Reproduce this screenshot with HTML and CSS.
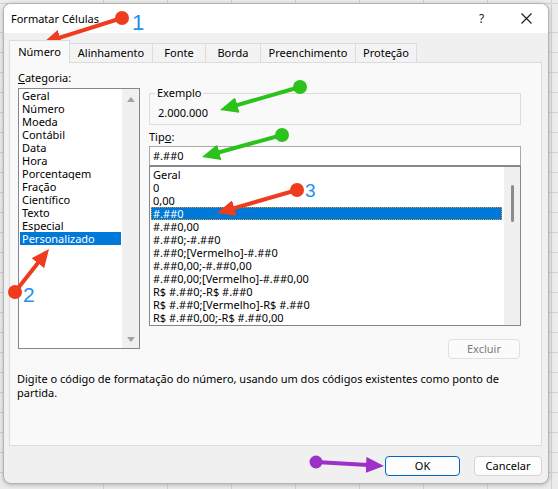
FILE: index.html
```html
<!DOCTYPE html>
<html lang="pt-BR">
<head>
<meta charset="utf-8">
<title>Formatar Células</title>
<link rel="stylesheet" href="styles.css">
</head>
<body>
<div class="desk">
  <div class="dialog">
    <div class="titlebar">
      <span class="title">Formatar Células</span>
      <span class="help">?</span>
      <span class="close"><svg width="11" height="11" viewBox="0 0 11 11"><path d="M0.5,0.5 L10.5,10.5 M10.5,0.5 L0.5,10.5" stroke="#1a1a1a" stroke-width="1.1" fill="none"/></svg></span>
    </div>
    <div class="tabs">
      <div class="tab active w1">Número</div>
      <div class="tab w2">Alinhamento</div>
      <div class="tab w3">Fonte</div>
      <div class="tab w4">Borda</div>
      <div class="tab w5">Preenchimento</div>
      <div class="tab w6">Proteção</div>
    </div>
    <div class="panel">
      <div class="cols">
        <div class="left">
          <div class="lbl"><u>C</u>ategoria:</div>
          <div class="list cat">
            <div class="items">
              <div class="item">Geral</div>
              <div class="item">Número</div>
              <div class="item">Moeda</div>
              <div class="item">Contábil</div>
              <div class="item">Data</div>
              <div class="item">Hora</div>
              <div class="item">Porcentagem</div>
              <div class="item">Fração</div>
              <div class="item">Científico</div>
              <div class="item">Texto</div>
              <div class="item">Especial</div>
              <div class="item sel">Personalizado</div>
            </div>
            <div class="vscroll">
              <span class="arrow up"></span>
              <span class="arrow down"></span>
            </div>
          </div>
        </div>
        <div class="right">
          <div class="group">
            <span class="legend">Exemplo</span>
            <div class="sample">2.000.000</div>
          </div>
          <div class="lbl tipo">Tip<u>o</u>:</div>
          <div class="input">#.##0</div>
          <div class="list types">
            <div class="items">
              <div class="item">Geral</div>
              <div class="item">0</div>
              <div class="item">0,00</div>
              <div class="item sel focus">#.##0</div>
              <div class="item">#.##0,00</div>
              <div class="item">#.##0;-#.##0</div>
              <div class="item">#.##0;[Vermelho]-#.##0</div>
              <div class="item">#.##0,00;-#.##0,00</div>
              <div class="item">#.##0,00;[Vermelho]-#.##0,00</div>
              <div class="item">R$ #.##0;-R$ #.##0</div>
              <div class="item">R$ #.##0;[Vermelho]-R$ #.##0</div>
              <div class="item">R$ #.##0,00;-R$ #.##0,00</div>
            </div>
            <div class="thinscroll"><span class="thumb"></span></div>
          </div>
          <div class="btnrow"><button class="btn disabled">Excluir</button></div>
        </div>
      </div>
      <p class="desc">Digite o código de formatação do número, usando um dos códigos existentes como ponto de partida.</p>
    </div>
    <div class="footer">
      <button class="btn ok">OK</button>
      <button class="btn cancel">Cancelar</button>
    </div>
  </div>

  <svg class="annot" width="558" height="489" viewBox="0 0 558 489">
    <defs>
      <marker id="mr" viewBox="0 0 18 16" refX="2" refY="8" markerWidth="18" markerHeight="16" orient="auto" markerUnits="userSpaceOnUse"><path d="M0,0 L18,8 L0,16 Z" fill="#ef3b1e"/></marker>
      <marker id="mg" viewBox="0 0 18 16" refX="2" refY="8" markerWidth="18" markerHeight="16" orient="auto" markerUnits="userSpaceOnUse"><path d="M0,0 L18,8 L0,16 Z" fill="#2bc21c"/></marker>
      <marker id="mp" viewBox="0 0 18 16" refX="2" refY="8" markerWidth="18" markerHeight="16" orient="auto" markerUnits="userSpaceOnUse"><path d="M0,0 L18,8 L0,16 Z" fill="#9d30c6"/></marker>
    </defs>
    <g class="red">
      <line x1="122" y1="18" x2="58.2" y2="38.2" stroke="#ef3b1e" stroke-width="4" marker-end="url(#mr)"/>
      <circle cx="122" cy="18" r="7" fill="#ef3b1e"/>
      <line x1="15" y1="292" x2="39.1" y2="261.6" stroke="#ef3b1e" stroke-width="4" marker-end="url(#mr)"/>
      <circle cx="15" cy="292" r="7" fill="#ef3b1e"/>
      <line x1="297" y1="190" x2="232.4" y2="208.6" stroke="#ef3b1e" stroke-width="4" marker-end="url(#mr)"/>
      <circle cx="297" cy="190" r="7" fill="#ef3b1e"/>
    </g>
    <g class="green">
      <line x1="300" y1="87" x2="235.4" y2="105.6" stroke="#2bc21c" stroke-width="4" marker-end="url(#mg)"/>
      <circle cx="300" cy="87" r="7" fill="#2bc21c"/>
      <line x1="282" y1="135" x2="217.4" y2="152.8" stroke="#2bc21c" stroke-width="4" marker-end="url(#mg)"/>
      <circle cx="282" cy="135" r="7" fill="#2bc21c"/>
    </g>
    <g class="purple">
      <line x1="316" y1="462" x2="368" y2="465" stroke="#9d30c6" stroke-width="4" marker-end="url(#mp)"/>
      <circle cx="316" cy="462" r="6.5" fill="#9d30c6"/>
    </g>
    <text class="num" x="132" y="30" font-size="22">1</text>
    <text class="num" x="23" y="302" font-size="21">2</text>
    <text class="num" x="305" y="197" font-size="19">3</text>
  </svg>
</div>
</body>
</html>
```

FILE: styles.css
```css
* { box-sizing: border-box; }
html, body { margin: 0; padding: 0; }
body {
  width: 558px;
  height: 489px;
  overflow: hidden;
  font-family: "Noto Sans", "Open Sans", sans-serif;
  font-size: 11px;
  color: #000;
}
.desk {
  position: relative;
  width: 558px;
  height: 489px;
  padding: 3px 0 0 3px;
  background-color: #ececec;
  background-image:
    repeating-linear-gradient(to bottom, transparent 0, transparent 19px, #d2d2d2 19px, #d2d2d2 20px),
    repeating-linear-gradient(to right, transparent 0, transparent 63px, #d2d2d2 63px, #d2d2d2 64px);
  background-position: 0 13px, 40px 0;
}
.dialog {
  width: 546px;
  height: 481px;
  border: 1px solid #b4b4b4;
  border-radius: 8px;
  background: #f0f0f0;
  overflow: hidden;
  box-shadow: 0 1px 4px rgba(0,0,0,0.25);
  display: flex;
  flex-direction: column;
}
.titlebar {
  height: 29px;
  background: #fff;
  display: flex;
  align-items: center;
  padding: 0 0 0 7px;
  font-size: 11px;
  line-height: 14px;
}
.title { flex: 1; }
.help { width: 12px; margin-right: 30px; color: #1a1a1a; font-size: 12px; }
.close { width: 11px; height: 11px; margin-right: 16px; display: flex; }

.tabs {
  margin: 7px 0 0 5px;
  height: 22px;
  display: flex;
  align-items: flex-end;
  position: relative;
  z-index: 1;
}
.tab {
  height: 19px;
  border: 1px solid #dcdcdc;
  border-bottom: none;
  margin-right: -1px;
  background: #f3f3f3;
  text-align: center;
  line-height: 18px;
  color: #000;
}
.tab.active {
  height: 23px;
  margin-bottom: -1px;
  background: #f9f9f9;
  line-height: 22px;
  padding-bottom: 1px;
}
.w1 { width: 61px; }
.w2 { width: 84px; }
.w3 { width: 54px; }
.w4 { width: 56px; }
.w5 { width: 96px; }
.w6 { width: 62px; }

.panel {
  margin: 0 6px 0 5px;
  height: 384px;
  border: 1px solid #dcdcdc;
  background: #f9f9f9;
  padding: 8px 20px 0 8px;
}
.cols { display: flex; gap: 9px; }
.left { width: 122px; }
.right { width: 372px; }
.lbl { line-height: 14px; height: 14px; margin-bottom: 3px; }
.lbl u { text-underline-offset: 1px; }

.list {
  border: 1px solid #828790;
  background: #fff;
  display: flex;
}
.items { flex: 1; padding: 0 1px; }
.item {
  height: 13px;
  line-height: 13px;
  padding-left: 2px;
  white-space: nowrap;
  overflow: hidden;
}
.item.sel { background: #0078d7; color: #fff; }
.item.focus { outline: 1px dotted #e0962e; outline-offset: -1px; }

.cat { height: 261px; }
.vscroll {
  width: 17px;
  background: #f0f0f0;
  display: flex;
  flex-direction: column;
  justify-content: space-between;
  align-items: center;
  padding: 8px 0 6px;
}
.arrow { width: 0; height: 0; border-left: 4px solid transparent; border-right: 4px solid transparent; }
.arrow.up { border-bottom: 5px solid #a3a3a3; }
.arrow.down { border-top: 5px solid #a3a3a3; }

.group {
  margin-top: 22px;
  height: 32px;
  border: 1px solid #dcdcdc;
  padding: 0 0 0 5px;
  display: flex;
  flex-direction: column;
}
.legend {
  align-self: flex-start;
  margin-top: -8px;
  padding: 0 2px;
  background: #f9f9f9;
  line-height: 14px;
  height: 14px;
}
.sample { line-height: 14px; height: 14px; margin-top: 6px; padding-left: 3px; }
.tipo { margin-top: 5px; margin-bottom: 2px; }
.input {
  height: 20px;
  border: 1px solid #a9a9a9;
  border-bottom-color: #8a8a8a;
  background: #fff;
  padding-left: 3px;
  line-height: 18px;
}
.types { height: 160px; }
.types .items { padding-top: 1px; }
.thinscroll {
  width: 16px;
  background: #f0f0f0;
  margin: 0 0 0 1px;
  padding-top: 18px;
  display: flex;
  justify-content: center;
}
.thumb { width: 3px; height: 37px; background: #8b8b8b; border-radius: 2px; margin-left: 1px; }

.btnrow { display: flex; justify-content: flex-end; margin-top: 13px; padding-right: 1px; }
.btn {
  font-family: inherit;
  font-size: 11px;
  height: 20px;
  padding: 0;
  border: 1px solid #d4d4d4;
  border-radius: 4px;
  background: #fdfdfd;
  color: #000;
  line-height: 18px;
}
.btn.disabled { width: 72px; color: #7a7a7a; border-color: #e0e0e0; background: #fbfbfb; }
.desc { margin: 13px 0 0 -1px; line-height: 14px; width: 500px; }

.footer {
  display: flex;
  justify-content: flex-end;
  gap: 14px;
  margin-top: 10px;
  padding-right: 6px;
}
.btn.ok { width: 75px; border-color: #0067c0; background: #fdfdfd; }
.btn.cancel { width: 68px; }

.annot { position: absolute; left: 0; top: 0; pointer-events: none; }
.num { font-family: "Liberation Sans", sans-serif; fill: #1f8ff2; }
```
